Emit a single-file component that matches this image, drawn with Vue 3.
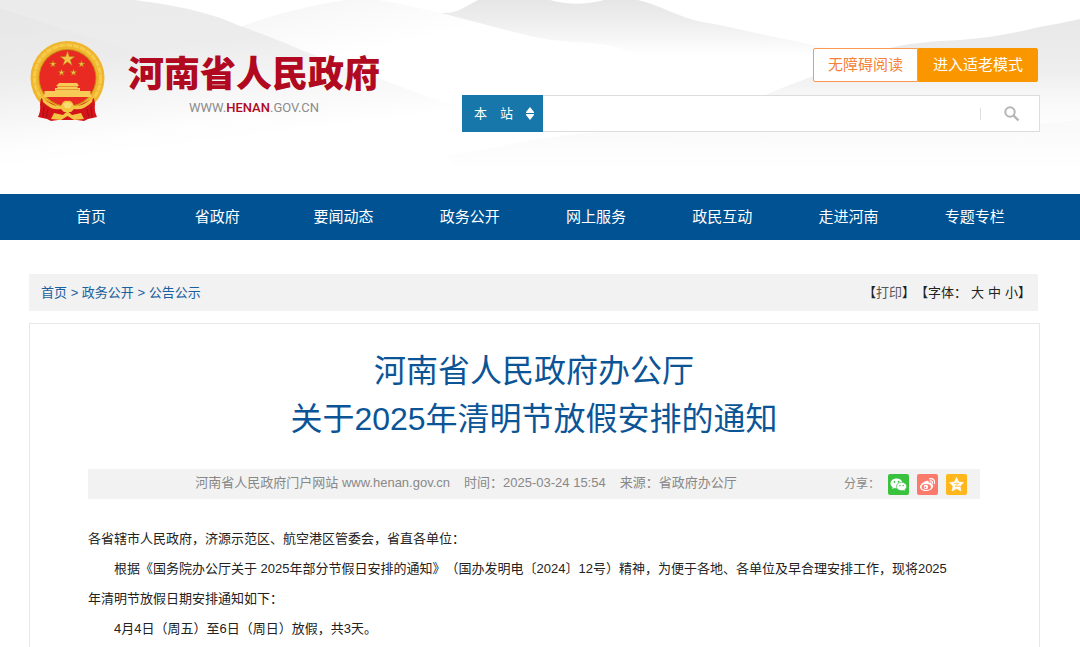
<script setup>
import { ref } from 'vue'

const navItems = ['首页', '省政府', '要闻动态', '政务公开', '网上服务', '政民互动', '走进河南', '专题专栏']
const crumbs = ['首页', '政务公开', '公告公示']
const scope = ref('site')
const keyword = ref('')

const print = () => window.print()
</script>

<template>
  <div class="page" lang="zh-CN">
    <header class="header">
      <svg class="hills" viewBox="0 0 1080 194" preserveAspectRatio="none" aria-hidden="true">
        <defs>
          <linearGradient id="hillBack" gradientUnits="userSpaceOnUse" x1="0" y1="0" x2="0" y2="56">
            <stop offset="0" stop-color="#e6e6e6" />
            <stop offset="0.4" stop-color="#eeeeee" />
            <stop offset="1" stop-color="#ffffff" />
          </linearGradient>
          <linearGradient id="hillMid" gradientUnits="userSpaceOnUse" x1="0" y1="0" x2="30" y2="130">
            <stop offset="0" stop-color="#e9e9e9" />
            <stop offset="0.5" stop-color="#f6f6f6" />
            <stop offset="1" stop-color="#ffffff" />
          </linearGradient>
          <linearGradient id="hillLeft" gradientUnits="userSpaceOnUse" x1="0" y1="0" x2="20" y2="165">
            <stop offset="0" stop-color="#ebebeb" />
            <stop offset="0.4" stop-color="#ececec" />
            <stop offset="1" stop-color="#ffffff" />
          </linearGradient>
          <linearGradient id="hillFront" gradientUnits="userSpaceOnUse" x1="0" y1="10" x2="20" y2="150">
            <stop offset="0" stop-color="#e3e3e3" />
            <stop offset="0.5" stop-color="#ececec" />
            <stop offset="1" stop-color="#ffffff" />
          </linearGradient>
          <linearGradient id="hillRight" gradientUnits="userSpaceOnUse" x1="0" y1="20" x2="0" y2="150">
            <stop offset="0" stop-color="#e8e8e8" />
            <stop offset="0.4" stop-color="#eeeeee" />
            <stop offset="1" stop-color="#ffffff" stop-opacity="0" />
          </linearGradient>
          <linearGradient id="hillLow" gradientUnits="userSpaceOnUse" x1="0" y1="125" x2="0" y2="172">
            <stop offset="0" stop-color="#f7f7f7" />
            <stop offset="1" stop-color="#ffffff" />
          </linearGradient>
        </defs>
        <path d="M440 13C458 14 464 7 478 0H550C568 5 585 5 604 0H638C660 5 680 18 702 22C740 28 780 40 830 48V60H440Z" fill="url(#hillBack)" />
        <path d="M240 27C280 12 310 6 345 0H378C430 8 480 24 530 36C565 44 590 41 612 46C645 55 660 68 690 73C730 79 755 88 790 97V165H240Z" fill="url(#hillMid)" />
        <path d="M0 0H135C180 6 212 13 240 26C290 43 320 60 380 79C410 90 436 100 465 108V170H0Z" fill="url(#hillLeft)" />
        <path d="M0 8C60 28 95 40 150 56C210 74 250 110 320 150V170H0Z" fill="url(#hillFront)" opacity="0.5" />
        <path d="M447 155C500 148 530 138 590 133C700 126 860 140 1080 120V172H455Z" fill="url(#hillLow)" opacity="0.7" />
        <path d="M640 150C700 125 740 104 765 95C790 84 815 76 840 66C880 48 900 44 940 41C980 40 1010 34 1035 28C1055 24 1068 22 1080 19V150Z" fill="url(#hillRight)" />
      </svg>

      <a class="brand" href="#">
        <svg class="emblem" viewBox="0 0 75 80" aria-hidden="true">
          <circle cx="37.500" cy="37" r="37" fill="#efb52c" />
          <circle cx="37.500" cy="37" r="33" fill="none" stroke="#f6cb4b" stroke-width="3" stroke-dasharray="6 1" />
          <circle cx="37.500" cy="37" r="29" fill="#c88b16" />
          <circle cx="37.500" cy="37" r="28" fill="#e92a22" />
          <g fill="#f3c246" stroke="#b8670f" stroke-width="0.500">
            <path d="M37.500 10L39.300 15.500H45L40.400 18.900L42.200 24.400L37.500 21L32.800 24.400L34.600 18.900L30 15.500H35.700Z" />
            <path d="M23 19.500L23.800 22H26.500L24.300 23.500L25.100 26L23 24.500L20.900 26L21.700 23.500L19.500 22H22.200Z" />
            <path d="M51.500 19.500L52.300 22H55L52.800 23.500L53.600 26L51.500 24.500L49.400 26L50.200 23.500L48 22H50.700Z" />
            <path d="M31.500 28L32.300 30.500H35L32.800 32L33.600 34.500L31.500 33L29.400 34.500L30.200 32L28 30.500H30.700Z" />
            <path d="M43.500 28L44.300 30.500H47L44.800 32L45.600 34.500L43.500 33L41.400 34.500L42.200 32L40 30.500H42.700Z" />
          </g>
          <path d="M29 42H47L49 45H47.500V47H50V50H60.500V53L62 56H13L14.500 53V50H25V47H27.500V45H26Z" fill="#f7cb55" />
          <path d="M27 45.500H48M26 48.500H49" stroke="#dd7c25" stroke-width="0.700" />
          <path d="M11 57L31 67H44L64 57L65 63Q64 70 67 76L58 78L54 80L47 79H28L21 80L17 78L8 76Q11 70 10 63Z" fill="#d3141a" />
          <path d="M12 56Q22 66 31 65Q33 59 37.500 60Q42 59 44 65Q53 66 63 56L62 61Q53 70 44 68L41 71H34L31 68Q22 70 13 61Z" fill="#f4c443" />
          <path d="M24 72L33 74L37.500 70L42 74L51 72L54 78L44 79L37.500 75L31 79L21 78Z" fill="#f4c443" />
          <path d="M33 63L37.500 61L42 63L40 67H35Z" fill="#f9dc73" />
          <path d="M14 66L13 76M18 68L16 77M61 66L62 76M57 68L59 77" stroke="#a90d14" stroke-width="1" />
        </svg>
        <span class="brand-text">
          <span class="brand-name">河南省人民政府</span>
          <span class="brand-url">WWW.<b>HENAN</b>.GOV.CN</span>
        </span>
      </a>

      <div class="tools">
        <div class="modes">
          <button class="mode" type="button">无障碍阅读</button>
          <button class="mode elder" type="button">进入适老模式</button>
        </div>
        <form class="search" @submit.prevent>
          <div class="scope">
            <select v-model="scope" aria-label="搜索范围">
              <option value="site">本　站</option>
            </select>
            <svg class="scope-arrows" viewBox="0 0 8 13" aria-hidden="true">
              <path d="M4 0L8 5V6H0V5ZM0 7H8V8L4 13L0 8Z" fill="#fff" />
            </svg>
          </div>
          <input v-model="keyword" class="keyword" type="text" aria-label="关键词">
          <button class="search-btn" type="submit" aria-label="搜索">
            <svg viewBox="0 0 16 16" aria-hidden="true">
              <circle cx="6" cy="6" r="4.700" fill="none" stroke="#b5b5b5" stroke-width="2" />
              <path d="M9.500 9.500L14.500 14.500" stroke="#b5b5b5" stroke-width="2.400" />
            </svg>
          </button>
        </form>
      </div>
    </header>

    <nav class="nav">
      <a v-for="item in navItems" :key="item" href="#">{{ item }}</a>
    </nav>

    <main class="main">
      <div class="crumb-bar">
        <div class="crumbs">
          <template v-for="(c, i) in crumbs" :key="c">
            <span v-if="i"> &gt; </span><a href="#">{{ c }}</a>
          </template>
        </div>
        <div class="page-tools">
          <span class="print">【<button type="button" @click="print">打印</button>】</span>
          <span>【字体：</span>
          <button type="button">大</button>
          <button type="button">中</button>
          <button type="button">小</button>
          <span>】</span>
        </div>
      </div>

      <article class="article">
        <h1>河南省人民政府办公厅<br>关于2025年清明节放假安排的通知</h1>

        <div class="meta">
          <div class="meta-info">
            <span>河南省人民政府门户网站 www.henan.gov.cn</span>
            <span>时间：2025-03-24 15:54</span>
            <span>来源：省政府办公厅</span>
          </div>
          <div class="share">
            <span>分享：</span>
            <a class="wechat" href="#" aria-label="微信">
              <svg viewBox="0 0 21 21" aria-hidden="true">
                <path d="M8.500 4.500C5 4.500 2.500 6.700 2.500 9.400C2.500 11 3.300 12.300 4.700 13.200L4.200 15L6.300 13.900C7 14.100 7.700 14.200 8.500 14.200C14.500 13.500 15.800 8.500 13 6C11.900 5 10.300 4.500 8.500 4.500Z" fill="#fff" />
                <path d="M13.500 8.300C10.600 8.300 8.500 10.200 8.500 12.500C8.500 14.900 10.700 16.700 13.500 16.700C14.200 16.700 14.800 16.600 15.400 16.400L17.200 17.400L16.800 15.700C18 14.900 18.700 13.800 18.700 12.500C18.700 10.200 16.400 8.300 13.500 8.300Z" fill="#fff" stroke="#3ac23f" stroke-width="0.700" />
                <g fill="#3ac23f">
                  <circle cx="6.500" cy="8" r="0.900" />
                  <circle cx="10.600" cy="7.600" r="0.900" />
                  <circle cx="12" cy="11.500" r="0.700" />
                  <circle cx="15.300" cy="11.500" r="0.700" />
                </g>
              </svg>
            </a>
            <a class="weibo" href="#" aria-label="微博">
              <svg viewBox="0 0 21 21" aria-hidden="true">
                <path d="M9 7.200C10.500 6.500 12 6.700 11.700 8.600C14 8 15 8.700 14.500 10.100C16 10.600 16.500 11.500 16 13C15.200 15.500 12.200 17 8.900 17C5.500 17 3 15.400 3 13C3 11 6 7.700 9 7.200Z" fill="#fff" />
                <ellipse cx="9.300" cy="12.900" rx="4.700" ry="3" fill="#fa7a6c" />
                <circle cx="8.900" cy="13" r="2.300" fill="#fff" />
                <circle cx="8.400" cy="13.400" r="0.900" fill="#fa7a6c" />
                <path d="M12.500 4.800C16.200 4 18.300 6.500 17.400 9.700M13 7C14.900 6.700 15.800 7.700 15.300 9.300" fill="none" stroke="#fff" stroke-width="1.200" stroke-linecap="round" />
              </svg>
            </a>
            <a class="qzone" href="#" aria-label="QQ空间">
              <svg viewBox="0 0 21 21" aria-hidden="true">
                <path d="M10.500 3.500L12.600 8L17.500 8.600L14 12L14.900 17L10.500 14.600L6.100 17L7 12L3.500 8.600L8.400 8Z" fill="#fff" stroke="#fff" stroke-width="0.600" stroke-linejoin="round" />
                <path d="M8 9.500Q10.500 9 12.500 9.500L9.200 12.200Q11.500 12.700 14 12.100" fill="none" stroke="#ffb71c" stroke-width="0.800" />
              </svg>
            </a>
          </div>
        </div>

        <div class="content">
          <p class="addressee">各省辖市人民政府，济源示范区、航空港区管委会，省直各单位：</p>
          <p>根据《国务院办公厅关于 2025年部分节假日安排的通知》（国办发明电〔2024〕12号）精神，为便于各地、各单位及早合理安排工作，现将2025年清明节放假日期安排通知如下：</p>
          <p>4月4日（周五）至6日（周日）放假，共3天。</p>
        </div>
      </article>
    </main>
  </div>
</template>

<style>
body {
  margin: 0;
  background: #fff;
  overflow: hidden;
}
</style>

<style scoped>
.page {
  font-family: "Liberation Sans", "Noto Sans CJK SC", sans-serif;
  font-size: 13px;
  color: #222;
  text-spacing-trim: space-all;
}
a {
  color: inherit;
  text-decoration: none;
}
button,
select,
input {
  box-sizing: border-box;
  margin: 0;
  padding: 0;
  border: 0;
  background: none;
  font: inherit;
  color: inherit;
}
button {
  cursor: pointer;
}
svg {
  display: block;
}

/* header */
.header {
  position: relative;
  display: flex;
  justify-content: space-between;
  box-sizing: border-box;
  min-height: 194px;
  padding: 41px 40px 0 30px;
}
.hills {
  position: absolute;
  inset: 0;
  width: 100%;
  height: 100%;
}
.brand {
  position: relative;
  display: flex;
  align-items: flex-start;
  gap: 23px;
}
.emblem {
  width: 75px;
  height: 80px;
}
.brand-text {
  display: flex;
  flex-direction: column;
  align-items: center;
  padding-top: 12px;
}
.brand-name {
  font-size: 36px;
  line-height: 44px;
  font-weight: 900;
  color: #b00920;
  white-space: nowrap;
}
.brand-url {
  font-family: Roboto, sans-serif;
  font-size: 13px;
  line-height: 22px;
  color: #8c8c8c;
}
.brand-url b {
  font-weight: 500;
  color: #b00920;
}
.tools {
  position: relative;
  display: flex;
  flex-direction: column;
  align-items: flex-end;
  gap: 13px;
  width: 578px;
  padding-top: 7px;
}
.modes {
  display: flex;
  margin-right: 2px;
}
.mode {
  height: 34px;
  padding: 0 14px;
  border: 1px solid #fa9a50;
  border-radius: 2px 0 0 2px;
  background: #fff;
  font-size: 15px;
  line-height: 32px;
  color: #f5813a;
}
.mode.elder {
  border-color: #fa9600;
  border-radius: 0 2px 2px 0;
  background: #fa9600;
  color: #fff;
}
.search {
  display: flex;
  box-sizing: border-box;
  width: 100%;
  height: 37px;
  border: 1px solid #ddd;
  background: #fff;
}
.scope {
  position: relative;
  width: 81px;
  margin: -1px 0 -1px -1px;
  background: #1777aa;
  color: #fff;
}
.scope select {
  width: 100%;
  height: 100%;
  padding-left: 12px;
  appearance: none;
  font-size: 13px;
}
.scope-arrows {
  position: absolute;
  right: 9px;
  top: 12px;
  width: 8px;
  height: 13px;
  pointer-events: none;
}
.keyword {
  flex: 1;
  min-width: 0;
  padding: 0 8px;
  outline: none;
}
.search-btn {
  display: flex;
  align-items: center;
  justify-content: center;
  align-self: center;
  width: 59px;
  height: 12px;
  padding-left: 4px;
  border-left: 1px solid #ddd;
}
.search-btn svg {
  width: 16px;
  height: 16px;
}

/* nav */
.nav {
  display: flex;
  padding: 0 42px 0 28px;
  background: #005293;
  font-size: 15px;
  line-height: 46px;
  color: #fff;
  text-align: center;
}
.nav a {
  flex: 1;
}

/* main */
.main {
  padding: 34px 40px 0 29px;
}
.crumb-bar {
  display: flex;
  justify-content: space-between;
  margin-right: 2px;
  padding: 0 7px 0 12px;
  background: #f2f2f2;
  line-height: 37px;
}
.crumbs {
  color: #1b609e;
}
.page-tools {
  display: flex;
}
.page-tools > button {
  padding-left: 4px;
}
.print button {
  color: #555;
}

.article {
  margin-top: 12px;
  padding: 23px 59px 23px 58px;
  border: 1px solid #e8e8e8;
}
h1 {
  margin: 0;
  font-size: 32px;
  line-height: 48px;
  font-weight: 400;
  color: #0b5597;
  text-align: center;
}
.meta {
  display: flex;
  height: 30px;
  margin-top: 26px;
  padding-right: 13px;
  background: #f2f2f2;
  line-height: 28px;
  color: #888;
}
.meta-info {
  display: flex;
  flex: 1;
  justify-content: center;
  gap: 14px;
}
.share {
  display: flex;
  align-items: center;
  gap: 8px;
  font-size: 12px;
}
.share svg {
  width: 21px;
  height: 21px;
}
.share a {
  border-radius: 2px;
}
.wechat {
  background: #3ac23f;
}
.weibo {
  background: #fa7a6c;
}
.qzone {
  background: #ffb71c;
}
.content {
  margin-top: 25px;
  padding-right: 28px;
  line-height: 30px;
}
.content p {
  margin: 0;
  text-indent: 2em;
}
.content .addressee {
  text-indent: 0;
}
</style>
